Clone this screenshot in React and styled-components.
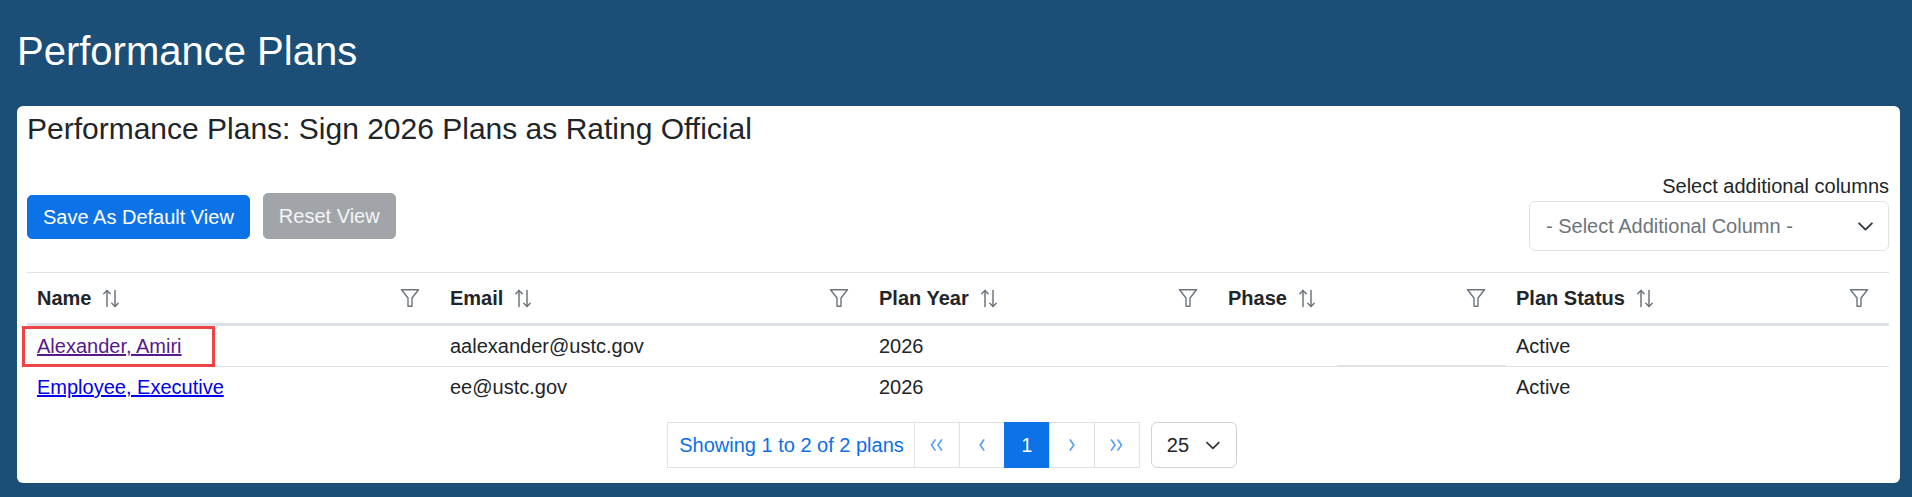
import React from "react";
import styled, { createGlobalStyle, css } from "styled-components";

const GlobalStyle = createGlobalStyle`
  html, body { margin: 0; padding: 0; }
  body {
    background: #1b4f78;
    font-family: "Liberation Sans", Arial, sans-serif;
    font-size: 20px;
    line-height: 1.5;
    color: #212529;
  }
  * { box-sizing: border-box; }
`;

const Page = styled.div`
  padding: 27px 12px 13px 17px;
`;

const PageTitle = styled.h1`
  margin: 0 0 31px;
  font-size: 40px;
  font-weight: 400;
  line-height: 48px;
  color: #ffffff;
`;

const Card = styled.section`
  background: #ffffff;
  border-radius: 6px;
  padding: 5px 11px 15px 10px;
`;

const CardTitle = styled.h4`
  margin: 0;
  font-size: 30px;
  font-weight: 400;
  line-height: 36px;
  color: #212529;
`;

const Toolbar = styled.div`
  display: flex;
  justify-content: space-between;
  margin-top: 24px;
  margin-bottom: 21px;
`;

const ButtonGroup = styled.div`
  display: flex;
  align-items: flex-end;
  gap: 13px;
  align-self: flex-end;
  margin-bottom: 12px;
`;

const Button = styled.button`
  font-family: inherit;
  font-size: 20px;
  line-height: 30px;
  border-radius: 5px;
  border: 1px solid transparent;
  cursor: pointer;
  color: #ffffff;
  ${(p) =>
    p.$variant === "primary"
      ? css`
          background: #0b72e7;
          border-color: #0b72e7;
          padding: 6px 15px;
        `
      : css`
          background: #a1a5aa;
          border-color: #a1a5aa;
          padding: 7px 15px;
          color: #f4f5f6;
          cursor: default;
        `}
`;

const ColumnPicker = styled.div`
  display: flex;
  flex-direction: column;
  align-items: flex-end;
`;

const PickerLabel = styled.label`
  font-size: 20px;
  line-height: 30px;
  color: #212529;
`;

const SelectBox = styled.div`
  display: flex;
  align-items: center;
  justify-content: space-between;
  width: 360px;
  height: 50px;
  padding: 0 14px 0 16px;
  border: 1px solid #dee2e6;
  border-radius: 6px;
  background: #fff;
  color: ${(p) => (p.$muted ? "#6c757d" : "#212529")};
  font-size: 20px;
`;

const Table = styled.table`
  width: 100%;
  border-collapse: collapse;
  table-layout: fixed;
  font-size: 20px;
`;

const HeadRow = styled.tr`
  border-top: 1px solid #dee2e6;
  border-bottom: 3px solid #dee2e6;
`;

const Th = styled.th`
  padding: 10px 0 10px 10px;
  text-align: left;
  font-weight: 700;
  line-height: 30px;
  color: #212529;
`;

const HeadInner = styled.div`
  display: flex;
  align-items: center;
`;

const SortIcon = styled.svg`
  margin-left: 11px;
  flex: none;
`;

const FilterIcon = styled.svg`
  margin-left: auto;
  margin-right: 20px;
  flex: none;
`;

const Row = styled.tr`
  border-bottom: ${(p) => (p.$divider ? "1px solid #dee2e6" : "none")};
`;

const Td = styled.td`
  position: relative;
  padding: 5px 10px;
  line-height: 30px;
  color: #212529;
  white-space: nowrap;
  ${(p) =>
    p.$partialBorder &&
    css`
      border-bottom: none;
      background: linear-gradient(#dee2e6, #dee2e6) no-repeat;
      background-size: calc(100% - 119px) 1px;
      background-position: right bottom;
    `}
  ${(p) =>
    p.$highlight &&
    css`
      &::after {
        content: "";
        position: absolute;
        left: -5px;
        top: 0;
        bottom: -1px;
        width: 187px;
        border: 3px solid #f04444;
        pointer-events: none;
      }
    `}
`;

const NameLink = styled.a`
  color: ${(p) => (p.$visited ? "#551a8b" : "#0000ee")};
  text-decoration: underline;
`;

const Footer = styled.div`
  display: flex;
  justify-content: center;
  align-items: center;
  margin-top: 15px;
  padding-right: 12px;
`;

const Pager = styled.div`
  display: flex;
  height: 46px;
`;

const PagerItem = styled.div`
  display: flex;
  align-items: center;
  justify-content: center;
  min-width: 46px;
  height: 46px;
  border: 1px solid ${(p) => (p.$active ? "#0b72e7" : "#dee2e6")};
  background: ${(p) => (p.$active ? "#0b72e7" : "#ffffff")};
  color: ${(p) => (p.$active ? "#ffffff" : "#0b6fe6")};
  padding: ${(p) => (p.$wide ? "0 10px 0 11px" : "0")};
  font-size: 20px;
  & + & {
    margin-left: -1px;
  }
`;

const PageSize = styled.div`
  display: flex;
  align-items: center;
  width: 86px;
  height: 46px;
  margin-left: 11px;
  padding: 0 15px 0 15px;
  gap: 16px;
  border: 1px solid #ced4da;
  border-radius: 6px;
  color: #212529;
  font-size: 20px;
`;

const Chevron = ({ size = 17, color = "#343a40" }) => (
  <svg width={size} height={size} viewBox="0 0 16 16" fill="none">
    <polyline points="2,5 8,11 14,5" stroke={color} strokeWidth="1.8" strokeLinecap="round" strokeLinejoin="round" />
  </svg>
);

const Sort = () => (
  <SortIcon width="18" height="21" viewBox="0 0 18 21" fill="none">
    <g stroke="#6c757d" strokeWidth="1.5" strokeLinecap="round" strokeLinejoin="round">
      <line x1="5" y1="2.5" x2="5" y2="18.5" />
      <polyline points="1.8,5.8 5,2.5 8.2,5.8" />
      <line x1="13" y1="2.5" x2="13" y2="18.5" />
      <polyline points="9.8,15.2 13,18.5 16.2,15.2" />
    </g>
  </SortIcon>
);

const Funnel = () => (
  <FilterIcon width="20" height="20" viewBox="0 0 20 20" fill="none">
    <path
      d="M1.5 1.8 H18.5 L12 10 V18.3 H8 V10 Z"
      stroke="#6c757d"
      strokeWidth="1.4"
      strokeLinejoin="round"
    />
  </FilterIcon>
);

const Arrow = ({ dir, double }) => {
  const stroke = "#5aa1f1";
  const pts = (x) => (dir === "left" ? `${x + 3.5},2 ${x},7 ${x + 3.5},12` : `${x},2 ${x + 3.5},7 ${x},12`);
  return (
    <svg width={double ? 16 : 8} height="14" viewBox={double ? "0 0 16 14" : "0 0 8 14"} fill="none">
      <g stroke={stroke} strokeWidth="1.7" strokeLinecap="round" strokeLinejoin="round">
        {double ? (
          <>
            <polyline points={pts(2.5)} />
            <polyline points={pts(9)} />
          </>
        ) : (
          <polyline points={pts(2.25)} />
        )}
      </g>
    </svg>
  );
};

const columns = [
  { label: "Name", width: 413 },
  { label: "Email", width: 429 },
  { label: "Plan Year", width: 349 },
  { label: "Phase", width: 288 },
  { label: "Plan Status", width: 383 },
];

const rows = [
  { name: "Alexander, Amiri", email: "aalexander@ustc.gov", year: "2026", phase: "", status: "Active", visited: true },
  { name: "Employee, Executive", email: "ee@ustc.gov", year: "2026", phase: "", status: "Active", visited: false },
];

export default function App() {
  return (
    <>
      <GlobalStyle />
      <Page>
        <PageTitle>Performance Plans</PageTitle>
        <Card>
          <CardTitle>Performance Plans: Sign 2026 Plans as Rating Official</CardTitle>
          <Toolbar>
            <ButtonGroup>
              <Button $variant="primary">Save As Default View</Button>
              <Button $variant="secondary" disabled>Reset View</Button>
            </ButtonGroup>
            <ColumnPicker>
              <PickerLabel>Select additional columns</PickerLabel>
              <SelectBox $muted>
                <span>- Select Additional Column -</span>
                <Chevron />
              </SelectBox>
            </ColumnPicker>
          </Toolbar>
          <Table>
            <colgroup>
              {columns.map((c) => (
                <col key={c.label} style={{ width: c.width }} />
              ))}
            </colgroup>
            <thead>
              <HeadRow>
                {columns.map((c) => (
                  <Th key={c.label}>
                    <HeadInner>
                      <span>{c.label}</span>
                      <Sort />
                      <Funnel />
                    </HeadInner>
                  </Th>
                ))}
              </HeadRow>
            </thead>
            <tbody>
              {rows.map((r, i) => (
                <Row key={r.name} $divider={i === 0}>
                  <Td $highlight={i === 0}>
                    <NameLink href="#" $visited={r.visited}>{r.name}</NameLink>
                  </Td>
                  <Td>{r.email}</Td>
                  <Td>{r.year}</Td>
                  <Td $partialBorder={i === 0}>{r.phase}</Td>
                  <Td>{r.status}</Td>
                </Row>
              ))}
            </tbody>
          </Table>
          <Footer>
            <Pager>
              <PagerItem $wide>Showing 1 to 2 of 2 plans</PagerItem>
              <PagerItem><Arrow dir="left" double /></PagerItem>
              <PagerItem><Arrow dir="left" /></PagerItem>
              <PagerItem $active>1</PagerItem>
              <PagerItem><Arrow dir="right" /></PagerItem>
              <PagerItem><Arrow dir="right" double /></PagerItem>
            </Pager>
            <PageSize>
              <span>25</span>
              <Chevron size={17} />
            </PageSize>
          </Footer>
        </Card>
      </Page>
    </>
  );
}
